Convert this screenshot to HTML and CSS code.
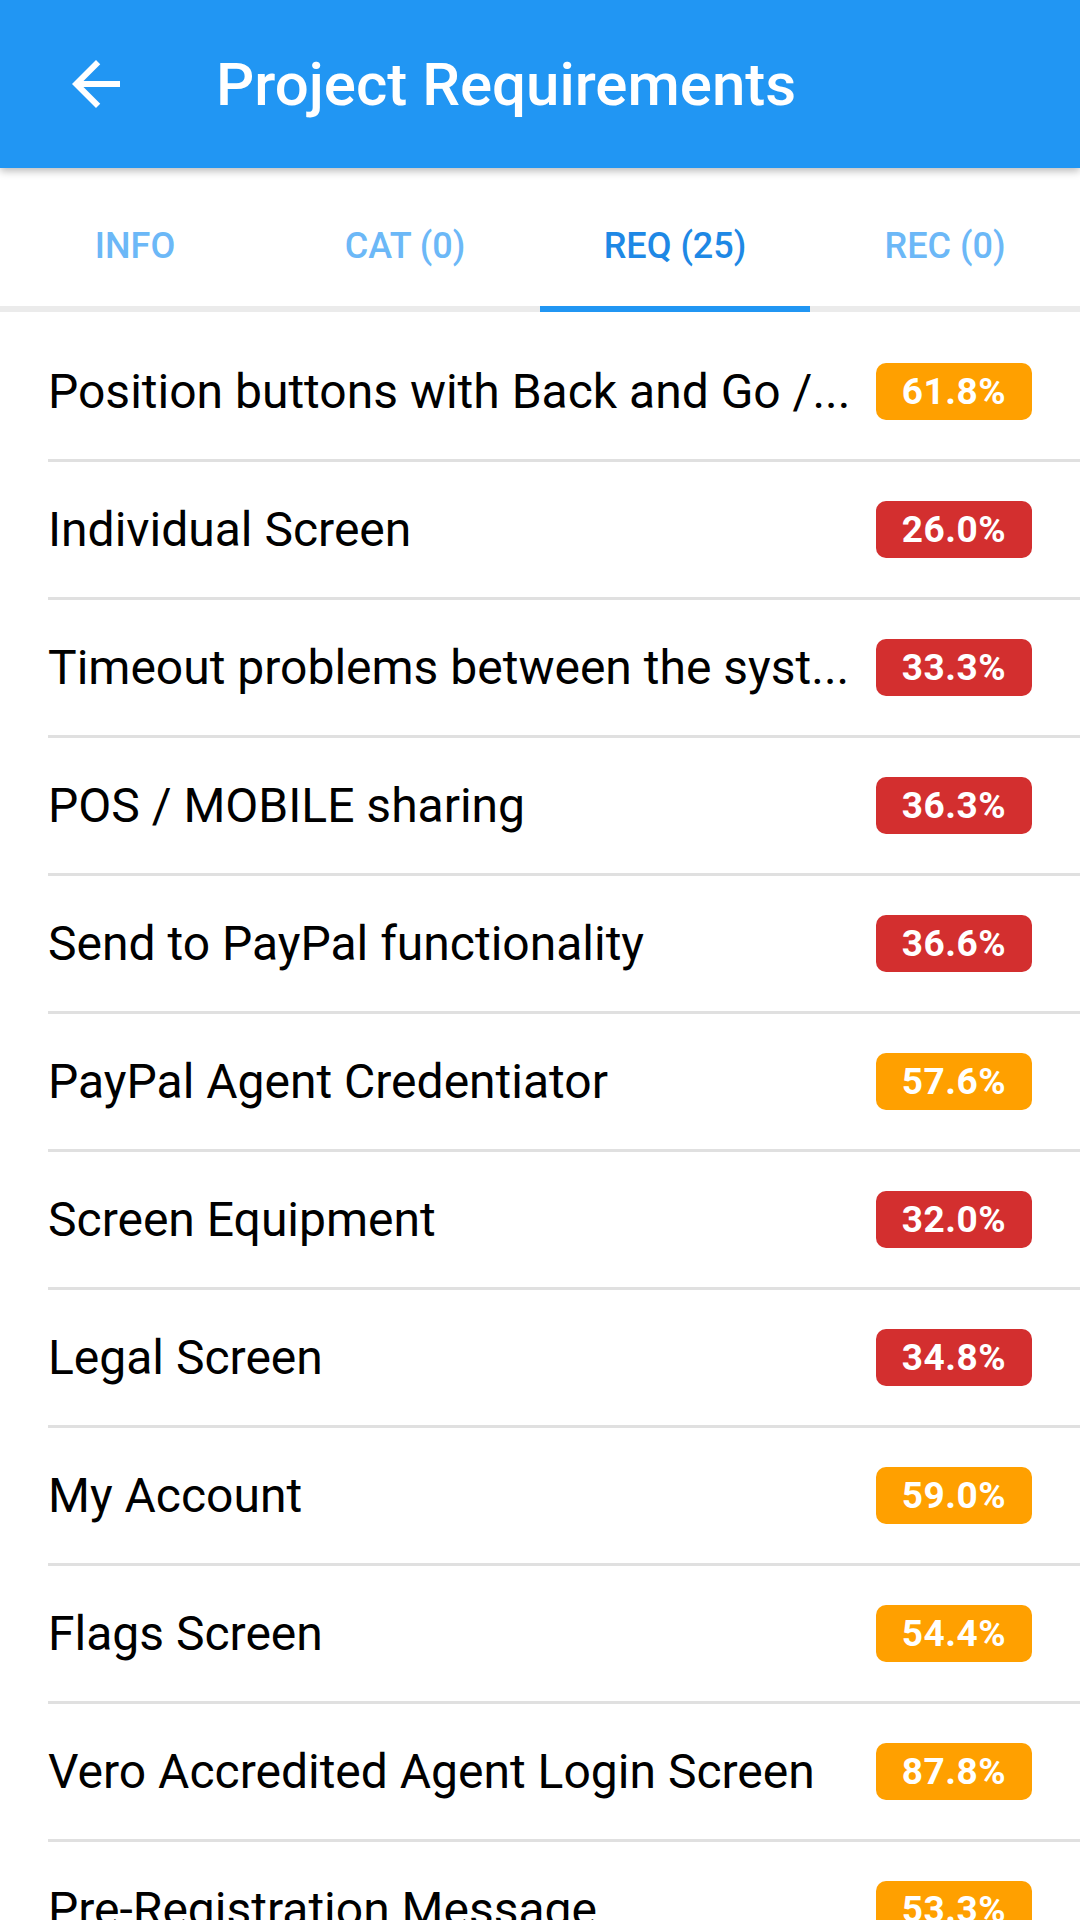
FILE: index.html
```html
<!DOCTYPE html>
<html>
<head>
<meta charset="utf-8">
<link rel="stylesheet" href="styles.css">
</head>
<body>
<div class="app">
  <header class="appbar">
    <div class="back">
      <svg viewBox="0 0 24 24" width="72" height="72"><path fill="#fff" d="M20 11H7.83l5.59-5.59L12 4l-8 8 8 8 1.41-1.41L7.83 13H20v-2z"/></svg>
    </div>
    <h1 class="title">Project Requirements</h1>
  </header>
  <nav class="tabs">
    <div class="tab">INFO</div>
    <div class="tab">CAT (0)</div>
    <div class="tab active">REQ (25)</div>
    <div class="tab">REC (0)</div>
  </nav>
  <ul class="list">
    <li class="row"><span class="name">Position buttons with Back and Go /...</span><span class="badge amber">61.8%</span></li>
    <li class="row"><span class="name">Individual Screen</span><span class="badge red">26.0%</span></li>
    <li class="row"><span class="name">Timeout problems between the syst...</span><span class="badge red">33.3%</span></li>
    <li class="row"><span class="name">POS / MOBILE sharing</span><span class="badge red">36.3%</span></li>
    <li class="row"><span class="name">Send to PayPal functionality</span><span class="badge red">36.6%</span></li>
    <li class="row"><span class="name">PayPal Agent Credentiator</span><span class="badge amber">57.6%</span></li>
    <li class="row"><span class="name">Screen Equipment</span><span class="badge red">32.0%</span></li>
    <li class="row"><span class="name">Legal Screen</span><span class="badge red">34.8%</span></li>
    <li class="row"><span class="name">My Account</span><span class="badge amber">59.0%</span></li>
    <li class="row"><span class="name">Flags Screen</span><span class="badge amber">54.4%</span></li>
    <li class="row"><span class="name">Vero Accredited Agent Login Screen</span><span class="badge amber">87.8%</span></li>
    <li class="row"><span class="name">Pre-Registration Message</span><span class="badge amber">53.3%</span></li>
  </ul>
</div>
</body>
</html>
```
FILE: styles.css
```css
html, body {
  margin: 0;
  padding: 0;
  background: #fff;
}
body {
  font-family: Roboto, "Noto Sans", sans-serif;
  width: 1080px;
  height: 1920px;
  overflow: hidden;
}
.app {
  display: flex;
  flex-direction: column;
}
.appbar {
  position: relative;
  z-index: 2;
  height: 168px;
  background: #2196f3;
  display: flex;
  align-items: center;
  box-shadow: 0 3px 8px rgba(0, 0, 0, 0.28);
}
.back {
  width: 72px;
  height: 72px;
  margin-left: 60px;
  display: flex;
}
.title {
  margin: 0 0 0 84px;
  color: #fff;
  font-size: 60px;
  font-weight: 500;
  letter-spacing: 0;
}
.tabs {
  display: grid;
  grid-template-columns: repeat(4, 1fr);
  height: 144px;
  background: #fff;
  box-shadow: inset 0 -6px 0 #ebebeb;
}
.tab {
  display: flex;
  align-items: center;
  justify-content: center;
  padding-top: 12px;
  font-size: 36px;
  font-weight: 500;
  color: #6cb8f7;
  box-sizing: border-box;
}
.tab.active {
  color: #1e88e5;
  box-shadow: inset 0 -6px 0 #2196f3;
}
.list {
  list-style: none;
  margin: 0;
  padding: 12px 0 0 48px;
}
.row {
  height: 135px;
  border-bottom: 3px solid #e0e0e0;
  display: flex;
  align-items: center;
  padding-right: 48px;
}
.name {
  flex: 1;
  min-width: 0;
  font-size: 48px;
  color: #000;
  white-space: nowrap;
  overflow: hidden;
  text-overflow: ellipsis;
}
.badge {
  width: 156px;
  height: 57px;
  border-radius: 10px;
  display: flex;
  align-items: center;
  justify-content: center;
  color: #fff;
  font-weight: 700;
  font-size: 37px;
  letter-spacing: 0.5px;
  margin-left: 20px;
}
.amber { background: #ffa000; }
.red { background: #d32f2f; }
```
